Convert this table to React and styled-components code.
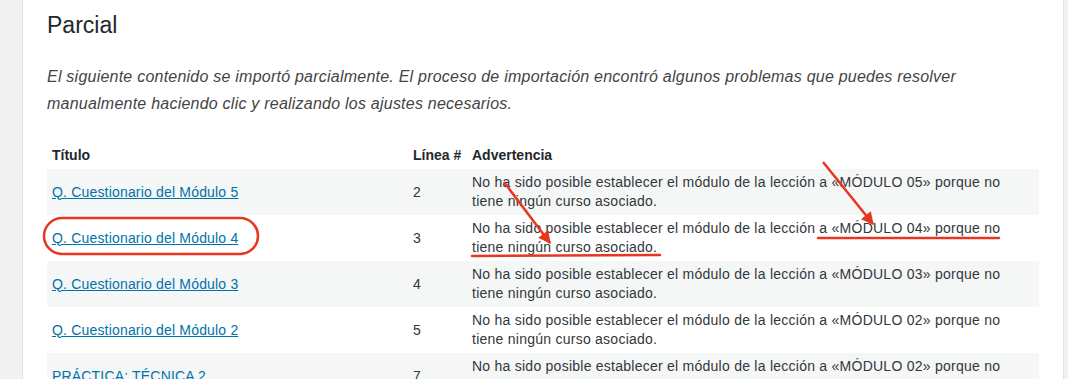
import React from "react";
import styled, { createGlobalStyle } from "styled-components";

const GlobalStyle = createGlobalStyle`
  html, body {
    margin: 0;
    padding: 0;
    background: #f1f1f1;
  }
  body {
    font-family: "Liberation Sans", Arial, sans-serif;
    color: #32373c;
  }
`;

const Page = styled.div`
  position: relative;
  width: 1068px;
  height: 379px;
  overflow: hidden;
`;

const Card = styled.div`
  margin-left: 22px;
  width: 1042px;
  height: 100%;
  box-sizing: border-box;
  background: #fff;
  border-left: 1px solid #e4e4e4;
  border-right: 1px solid #e2e2e2;
  padding: 10px 25px 0 24px;
`;

const Title = styled.h2`
  margin: 0;
  font-size: 23px;
  line-height: 30px;
  font-weight: 400;
  color: #23282d;
`;

const Intro = styled.p`
  margin: 23px 0 24px;
  font-size: 16px;
  line-height: 27px;
  font-style: italic;
  letter-spacing: 0.23px;
  color: #444;
`;

const Table = styled.table`
  width: 992px;
  border-collapse: collapse;
  table-layout: fixed;
  font-size: 14px;
  letter-spacing: 0.18px;
`;

const Th = styled.th`
  text-align: left;
  font-weight: 700;
  color: #23282d;
  padding: 4px 5px;
  line-height: 20px;
  white-space: nowrap;
  letter-spacing: 0;
  width: ${(p) => p.$w || "auto"};
`;

const Row = styled.tr`
  background: ${(p) => (p.$striped ? "#f5f6f6" : "#fff")};
`;

const Td = styled.td`
  padding: 4px 5px;
  line-height: 19px;
  vertical-align: middle;
  color: #32373c;
`;

const Warning = styled(Td)`
  padding-right: 14px;
  letter-spacing: 0.25px;
`;

const Link = styled.a`
  color: #0073aa;
  text-decoration: underline;
  cursor: pointer;
`;

const Marks = styled.svg`
  position: absolute;
  left: 0;
  top: 0;
  pointer-events: none;
`;

const rows = [
  { title: "Q. Cuestionario del Módulo 5", line: 2, mod: "05" },
  { title: "Q. Cuestionario del Módulo 4", line: 3, mod: "04" },
  { title: "Q. Cuestionario del Módulo 3", line: 4, mod: "03" },
  { title: "Q. Cuestionario del Módulo 2", line: 5, mod: "02" },
  { title: "PRÁCTICA: TÉCNICA 2", line: 7, mod: "02" },
];

const RED = "#e8351f";

const Annotations = () => (
  <Marks width="1068" height="379" viewBox="0 0 1068 379">
    <defs>
      <marker
        id="head"
        viewBox="0 0 10 10"
        refX="9"
        refY="5"
        markerWidth="5.5"
        markerHeight="5"
        orient="auto"
        markerUnits="strokeWidth"
      >
        <path d="M0 0 L10 5 L0 10 Z" fill={RED} />
      </marker>
    </defs>
    <rect x="44" y="218" width="214" height="36" rx="18" fill="none" stroke={RED} strokeWidth="2.5" />
    <line x1="504" y1="182" x2="550" y2="243" stroke={RED} strokeWidth="2.5" markerEnd="url(#head)" />
    <line x1="823" y1="162" x2="873" y2="224" stroke={RED} strokeWidth="2.5" markerEnd="url(#head)" />
    <line x1="472" y1="256" x2="660" y2="255" stroke={RED} strokeWidth="2.5" strokeLinecap="round" />
    <line x1="818" y1="238" x2="999" y2="238" stroke={RED} strokeWidth="2.5" strokeLinecap="round" />
  </Marks>
);

export default function App() {
  return (
    <>
      <GlobalStyle />
      <Page>
        <Card>
          <Title>Parcial</Title>
          <Intro>
            El siguiente contenido se importó parcialmente. El proceso de importación encontró algunos
            problemas que puedes resolver manualmente haciendo clic y realizando los ajustes necesarios.
          </Intro>
          <Table>
            <thead>
              <tr>
                <Th $w="351px">Título</Th>
                <Th $w="49px">Línea #</Th>
                <Th>Advertencia</Th>
              </tr>
            </thead>
            <tbody>
              {rows.map((r, i) => (
                <Row key={r.line} $striped={i % 2 === 0}>
                  <Td>
                    <Link>{r.title}</Link>
                  </Td>
                  <Td>{r.line}</Td>
                  <Warning>
                    No ha sido posible establecer el módulo de la lección a «MÓDULO {r.mod}» porque no
                    tiene ningún curso asociado.
                  </Warning>
                </Row>
              ))}
            </tbody>
          </Table>
        </Card>
        <Annotations />
      </Page>
    </>
  );
}
